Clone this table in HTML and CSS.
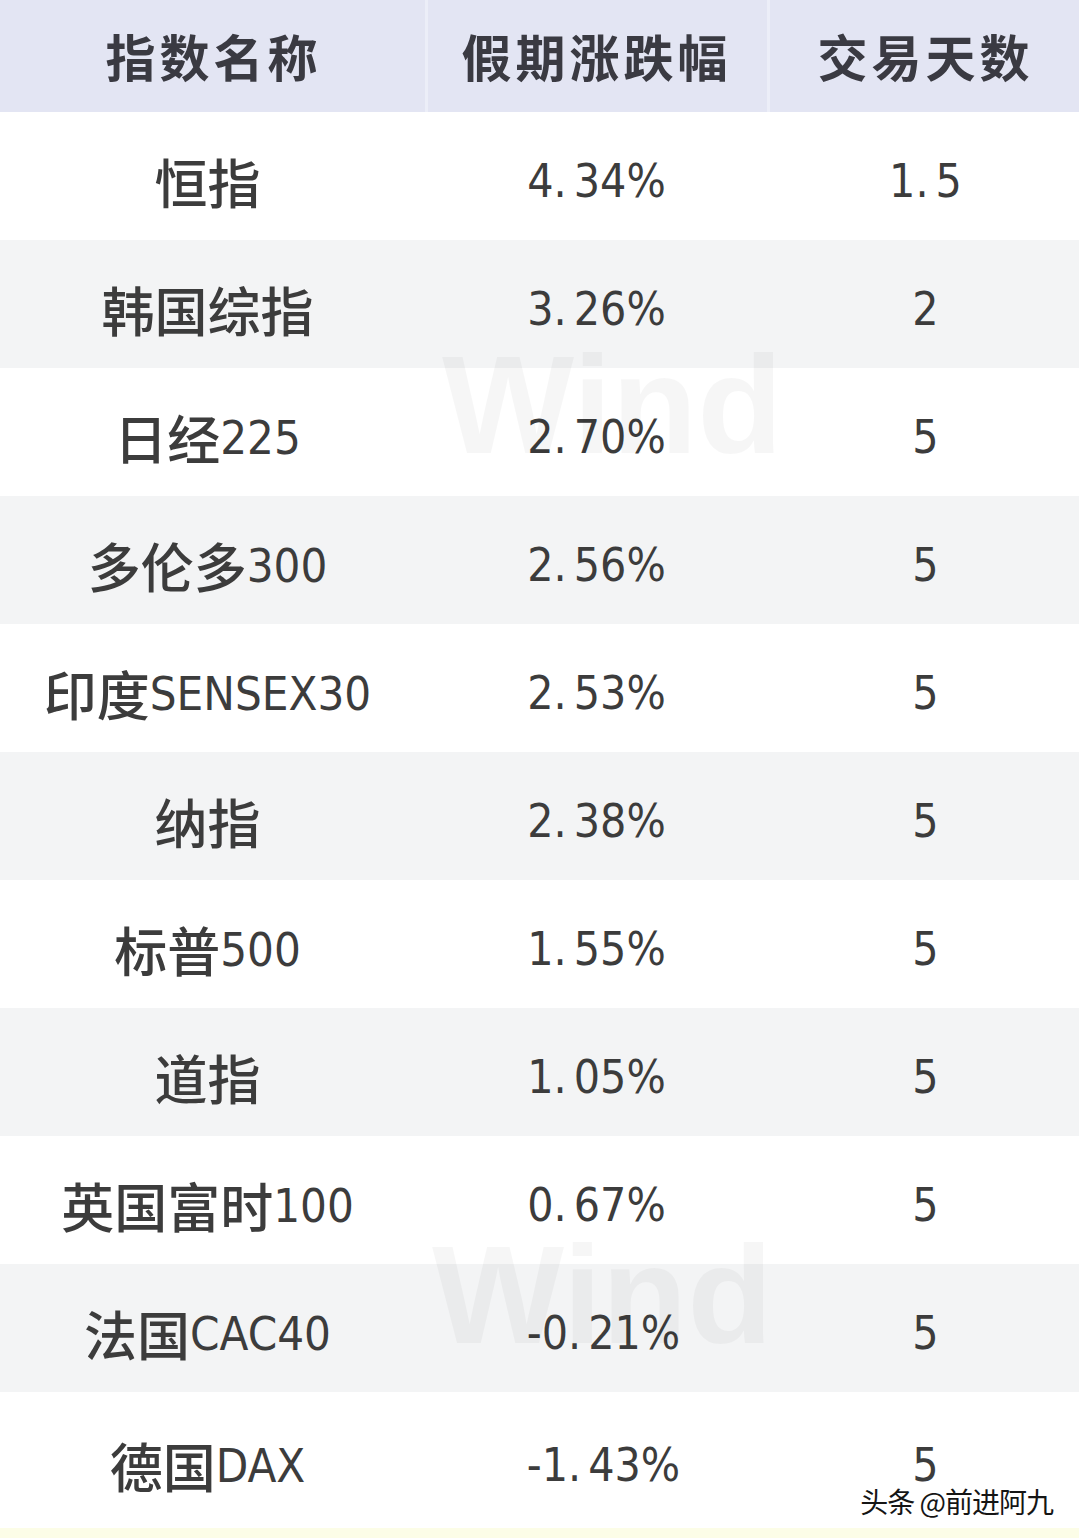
FILE: index.html
```html
<!DOCTYPE html>
<html lang="zh-CN">
<head>
<meta charset="utf-8">
<title>指数假期涨跌幅</title>
<link rel="stylesheet" href="styles.css">
</head>
<body>
<div class="page">
  <div class="table">
    <div class="row head">
      <div class="cell c1">指数名称</div>
      <div class="cell c2">假期涨跌幅</div>
      <div class="cell c3">交易天数</div>
    </div>
    <div class="row"><div class="cell c1">恒指</div><div class="cell c2">4<span class="dot">.</span>34%</div><div class="cell c3">1<span class="dot">.</span>5</div></div>
    <div class="row alt"><div class="cell c1">韩国综指</div><div class="cell c2">3<span class="dot">.</span>26%</div><div class="cell c3">2</div></div>
    <div class="row"><div class="cell c1">日经<span class="lat">225</span></div><div class="cell c2">2<span class="dot">.</span>70%</div><div class="cell c3">5</div></div>
    <div class="row alt"><div class="cell c1">多伦多<span class="lat">300</span></div><div class="cell c2">2<span class="dot">.</span>56%</div><div class="cell c3">5</div></div>
    <div class="row"><div class="cell c1">印度<span class="lat">SENSEX30</span></div><div class="cell c2">2<span class="dot">.</span>53%</div><div class="cell c3">5</div></div>
    <div class="row alt"><div class="cell c1">纳指</div><div class="cell c2">2<span class="dot">.</span>38%</div><div class="cell c3">5</div></div>
    <div class="row"><div class="cell c1">标普<span class="lat">500</span></div><div class="cell c2">1<span class="dot">.</span>55%</div><div class="cell c3">5</div></div>
    <div class="row alt"><div class="cell c1">道指</div><div class="cell c2">1<span class="dot">.</span>05%</div><div class="cell c3">5</div></div>
    <div class="row"><div class="cell c1">英国富时<span class="lat">100</span></div><div class="cell c2">0<span class="dot">.</span>67%</div><div class="cell c3">5</div></div>
    <div class="row alt"><div class="cell c1">法国<span class="lat">CAC40</span></div><div class="cell c2 neg">-0<span class="dot">.</span>21%</div><div class="cell c3">5</div></div>
    <div class="row last"><div class="cell c1">德国<span class="lat">DAX</span></div><div class="cell c2 neg">-1<span class="dot">.</span>43%</div><div class="cell c3">5</div></div>
  </div>
  <div class="strip"></div>
  <div class="watermark wm1">Wind</div>
  <div class="watermark wm2">Wind</div>
  <div class="credit">头条 @前进阿九</div>
</div>
</body>
</html>
```
FILE: styles.css
```css
html, body {
  margin: 0;
  padding: 0;
  background: #ffffff;
}
.page {
  position: relative;
  width: 1079px;
  height: 1538px;
  overflow: hidden;
  display: flex;
  flex-direction: column;
  font-family: "DejaVu Sans Condensed", "Noto Sans CJK SC", sans-serif;
  color: #3c3c3c;
}
.table {
  flex: 1;
  display: flex;
  flex-direction: column;
}
.row {
  display: grid;
  grid-template-columns: 425px 345px 309px;
  height: 128px;
  background: #ffffff;
}
.row.alt {
  background: #f3f4f5;
}
.row.last {
  flex: 1;
  height: auto;
}
.row.head {
  height: 112px;
  background: #e3e5f3;
}
.cell {
  display: flex;
  align-items: center;
  justify-content: center;
  font-size: 46px;
  padding-top: 10px;
  white-space: nowrap;
}
.head .cell {
  padding-top: 0;
  padding-bottom: 2px;
  color: #3a3a42;
  font-weight: 700;
  font-family: "Noto Sans CJK SC", sans-serif;
  font-size: 50px;
  letter-spacing: 4px;
}
.head .c2 {
  border-left: 3px solid #eceef8;
  border-right: 3px solid #eceef8;
}
.c1 {
  font-family: "Noto Sans CJK SC", sans-serif;
  font-weight: 500;
  font-size: 53px;
  padding-right: 10px;
}
.head .c1 {
  font-size: 50px;
  padding-right: 0;
  padding-left: 2px;
}
.lat {
  font-family: "DejaVu Sans Condensed", sans-serif;
  font-weight: 400;
  font-size: 47px;
}
.c2 {
  padding-right: 2px;
}
.c3 {
  padding-left: 2px;
}
.dot {
  margin-right: 7px;
}
.neg {
  padding-left: 14px;
}
.strip {
  height: 10px;
  background: #fcfde7;
}
.watermark {
  position: absolute;
  font-family: "Liberation Sans", sans-serif;
  font-weight: 700;
  font-size: 140px;
  color: rgba(0, 0, 0, 0.035);
  line-height: 1;
}
.wm1 {
  left: 442px;
  top: 335px;
}
.wm2 {
  left: 432px;
  top: 1225px;
}
.credit {
  position: absolute;
  right: 26px;
  top: 1481px;
  font-family: "Noto Sans CJK SC", sans-serif;
  font-size: 28px;
  letter-spacing: -1px;
  color: #151515;
  text-shadow: 1px 1px 0 #fff, -1px -1px 0 #fff, 1px -1px 0 #fff, -1px 1px 0 #fff;
}
```
